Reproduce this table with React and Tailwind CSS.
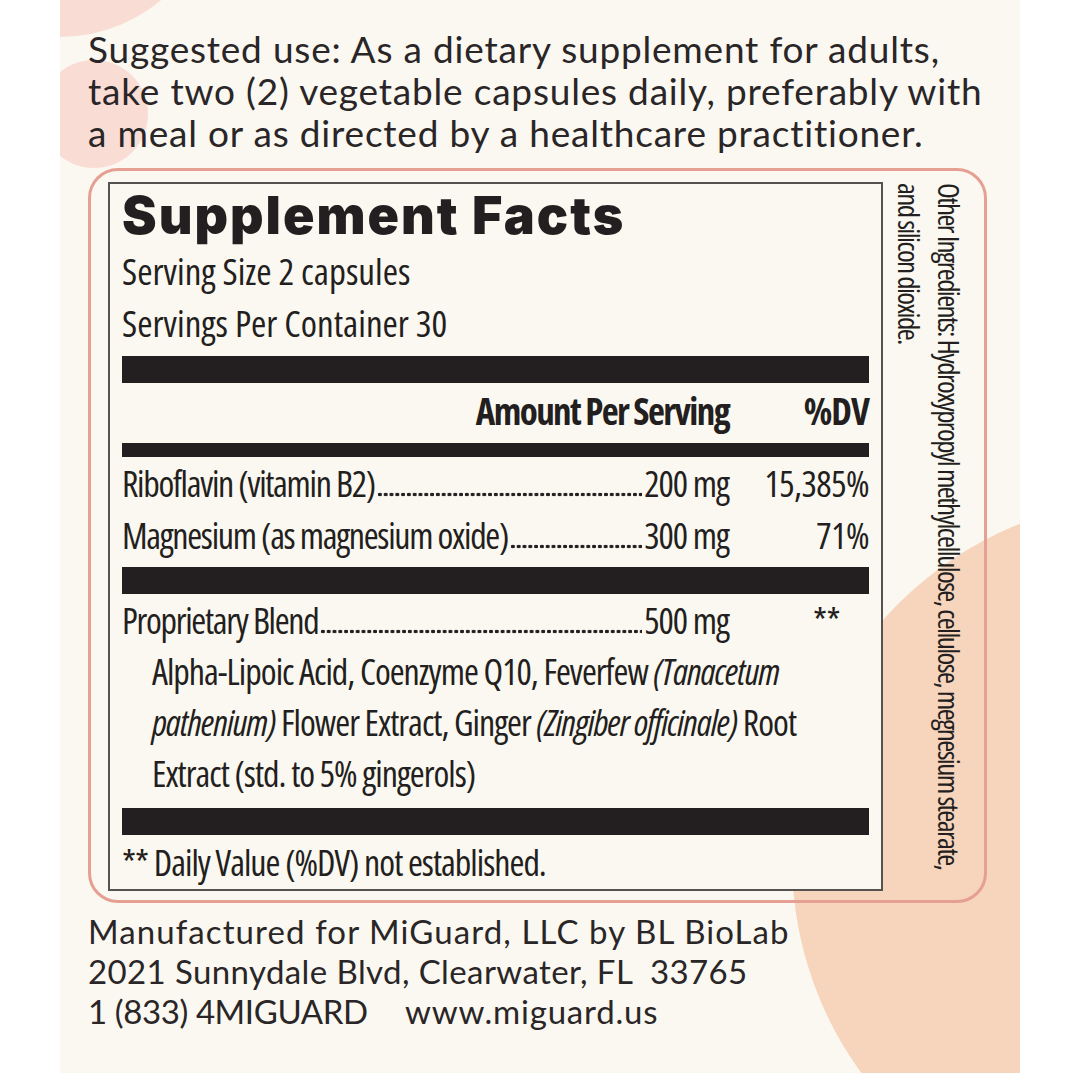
const BAR = "bg-[#231f20]";

function Row({ name, amt, dv, dvClass = "", lead = "leading-[52px]", extra = "" }) {
  return (
    <div className={`flex items-baseline ${lead} ${extra}`}>
      <span className="whitespace-nowrap tracking-[-1.3px]">{name}</span>
      <span className="mx-[2px] h-[5px] min-w-0 flex-1 bg-[radial-gradient(circle,#231f20_1.7px,transparent_2.1px)] bg-[length:5.8px_5px] bg-repeat-x" />
      <span className="whitespace-nowrap">{amt}</span>
      <span className={`w-[140px] whitespace-nowrap text-right tracking-[-0.5px] ${dvClass}`}>{dv}</span>
    </div>
  );
}

export default function App() {
  return (
    <div className="w-[1080px] h-[1080px] bg-white">
      <div className="relative ml-[60px] w-[960px] h-[1073px] overflow-hidden bg-[#fbf8f1]">
        <div className="absolute left-[-157px] top-[-277px] w-[314px] h-[314px] rounded-full bg-[#f9ddd5]" />
        <div className="absolute left-[-20px] top-[60px] w-[108px] h-[108px] rounded-full bg-[#f9ddd5]" />
        <div className="absolute left-[732px] top-[498px] w-[724px] h-[724px] rounded-full bg-[#f7d4bc]" />

        <div className="relative pl-[28px] pt-[28px]">
          <p className="whitespace-nowrap font-['Lato',sans-serif] text-[37px] leading-[42px] tracking-[0.8px] text-[#2a2627]">
            Suggested use: As a dietary supplement for adults,
            <br />
            take two (2) vegetable capsules daily, preferably with
            <br />
            a meal or as directed by a healthcare practitioner.
          </p>

          <div className="mt-[14px] flex h-[735px] w-[899px] rounded-[30px] border-[3px] border-[#e5a093] pl-[17px] pt-[11px]">
            <div className="w-[775px] self-start border-2 border-[#555250] bg-[#fbf8f1] px-[12px] pt-[6px] font-['Open_Sans',sans-serif] [font-stretch:75%] text-[36px] tracking-[-1px] text-[#231f20]">
              <h1 className="font-['Inter',sans-serif] [font-stretch:100%] text-[52px] font-black leading-[52px] tracking-[2px]">
                Supplement Facts
              </h1>
              <div className="mt-[3px] text-[37px] leading-[52px] tracking-normal">
                Serving Size 2 capsules
                <br />
                Servings Per Container 30
              </div>
              <div className={`mt-[7px] h-[27px] ${BAR}`} />
              <div className="mt-[2px] flex justify-end text-[37px] font-bold leading-[52px] tracking-[-1.6px]">
                <span>Amount Per Serving</span>
                <span className="w-[140px] text-right tracking-[-1px]">%DV</span>
              </div>
              <div className={`mt-[6px] h-[14px] ${BAR}`} />
              <Row extra="mt-[1px]" name="Riboflavin (vitamin B2)" amt="200 mg" dv="15,385%" />
              <Row name="Magnesium (as magnesium oxide)" amt="300 mg" dv="71%" />
              <div className={`mt-[5px] h-[27px] ${BAR}`} />
              <Row
                extra="mt-[1px]"
                lead="leading-[51px]"
                name="Proprietary Blend"
                amt="500 mg"
                dv="**"
                dvClass="pr-[29px]"
              />
              <div className="whitespace-nowrap pl-[30px] leading-[51px]">
                Alpha-Lipoic Acid, Coenzyme Q10, Feverfew <i>(Tanacetum</i>
                <br />
                <i>pathenium)</i> Flower Extract, Ginger <i>(Zingiber officinale)</i> Root
                <br />
                Extract (std. to 5% gingerols)
              </div>
              <div className={`mt-[9px] h-[27px] ${BAR}`} />
              <div className="mt-[2px] leading-[52px]">** Daily Value (%DV) not established.</div>
            </div>

            <div className="ml-[6px] pt-[1px] whitespace-nowrap [writing-mode:vertical-rl] font-['Open_Sans',sans-serif] [font-stretch:75%] text-[29px] leading-[40px] tracking-[-1.6px] text-[#231f20]">
              Other Ingredients: Hydroxypropyl methylcellulose, cellulose, megnesium stearate,
              <br />
              and silicon dioxide.
            </div>
          </div>

          <div className="mt-[8px] whitespace-nowrap font-['Lato',sans-serif] text-[33px] leading-[40px] tracking-[0.8px] text-[#2a2627]">
            <div className="tracking-[1.1px]">Manufactured for MiGuard, LLC by BL BioLab</div>
            <div className="tracking-[0.4px]">2021 Sunnydale Blvd, Clearwater, FL&nbsp; 33765</div>
            <div>
              <span className="inline-block w-[317px] tracking-[-0.4px]">1 (833) 4MIGUARD</span>
              <span>www.miguard.us</span>
            </div>
          </div>
        </div>
      </div>
    </div>
  );
}
